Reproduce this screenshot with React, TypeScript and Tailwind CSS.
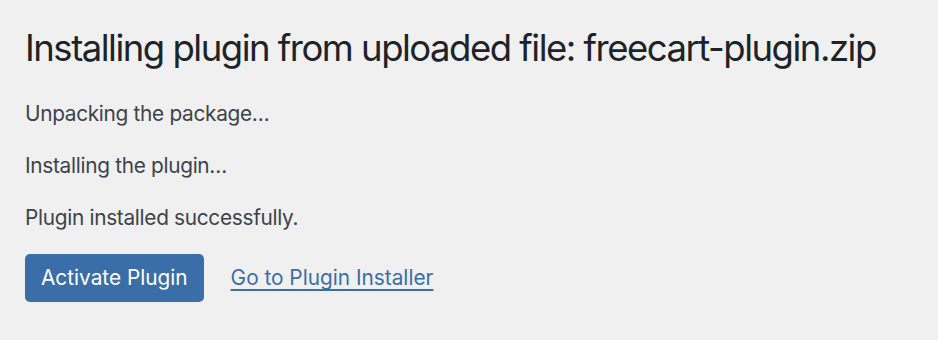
export default function App() {
  return (
    <div className="min-h-[340px] w-full bg-[#f0f0f1] pl-[25px] pt-[24px]" style={{ fontFamily: 'Inter, "Noto Sans", sans-serif' }}>
      <h1 className="whitespace-nowrap text-[36.5px] leading-[48px] text-[#1d2327] font-normal tracking-[-1.5px]">
        Installing plugin from uploaded file: freecart-plugin.zip
      </h1>
      <div className="mt-[26px] flex flex-col gap-[21px] text-[20.8px] leading-[31px] text-[#3c434a] tracking-[-0.3px]">
        <p>Unpacking the package…</p>
        <p>Installing the plugin…</p>
        <p>Plugin installed successfully.</p>
      </div>
      <div className="mt-[21px] flex items-center gap-[27px]">
        <button className="h-[48px] rounded-[5px] bg-[#3a6ea8] px-[16px] text-[20.8px] text-white">
          Activate Plugin
        </button>
        <a href="#" className="text-[20.8px] text-[#3a6ea8] underline underline-offset-[4px]">
          Go to Plugin Installer
        </a>
      </div>
    </div>
  );
}
